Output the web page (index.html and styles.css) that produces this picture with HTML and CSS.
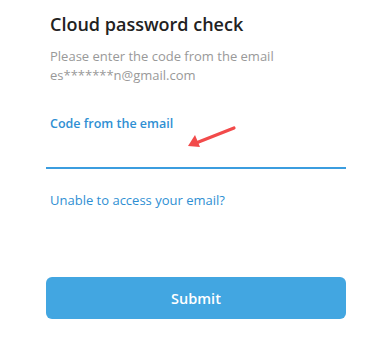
FILE: index.html
```html
<!DOCTYPE html>
<html lang="en">
<head>
    <meta charset="UTF-8">
    <meta name="viewport" content="width=device-width, initial-scale=1.0">
    <title>Cloud password check</title>
    <link rel="stylesheet" href="styles.css">
</head>
<body>

<div class="panel">
    <h1 class="title">Cloud password check</h1>
    <p class="hint">Please enter the code from the email<br>es*******n@gmail.com</p>

    <div class="field">
        <label for="email-code">Code from the email</label>
        <input type="text" id="email-code">
        <svg class="pointer" width="60" height="30" viewBox="0 0 60 30">
            <path d="M50 3 L12 18" stroke="#f24a4a" stroke-width="3.2" stroke-linecap="round" fill="none"/>
            <path d="M4 21 L11 10 L16 22 Z" fill="#f24a4a"/>
        </svg>
    </div>

    <a class="help-link" href="#">Unable to access your email?</a>

    <button class="submit-btn">Submit</button>
</div>

</body>
</html>
```

FILE: styles.css
```css
body {
    font-family: "Open Sans", Arial, sans-serif;
    background: #fff;
    margin: 0;
    padding: 0;
}
.panel {
    width: 300px;
    margin-left: 46px;
    padding-top: 12px;
}
.title {
    font-size: 18px;
    font-weight: 600;
    color: #222;
    margin: 0 0 0 4px;
    line-height: 24px;
}
.hint {
    font-size: 13px;
    color: #999;
    line-height: 19px;
    margin: 11px 0 0 4px;
}
.field {
    position: relative;
    margin-top: 30px;
}
.field label {
    display: block;
    font-size: 12.5px;
    font-weight: 600;
    color: #2f8fd3;
    margin-left: 4px;
    line-height: 18px;
}
.field input {
    display: block;
    width: 100%;
    box-sizing: border-box;
    border: none;
    border-bottom: 2px solid #3b9ddf;
    height: 36px;
    outline: none;
    font-size: 14px;
    padding: 0 4px;
    margin: 0;
}
.pointer {
    position: absolute;
    left: 138px;
    top: 10px;
}
.help-link {
    display: block;
    font-size: 13px;
    color: #2f8fd3;
    text-decoration: none;
    margin: 22px 0 0 4px;
    line-height: 19px;
}
.submit-btn {
    display: block;
    width: 100%;
    height: 42px;
    margin-top: 67px;
    background-color: #42a6e1;
    color: #fff;
    border: none;
    border-radius: 6px;
    font-family: "Open Sans", Arial, sans-serif;
    font-size: 14.5px;
    font-weight: 600;
    cursor: pointer;
}
```
